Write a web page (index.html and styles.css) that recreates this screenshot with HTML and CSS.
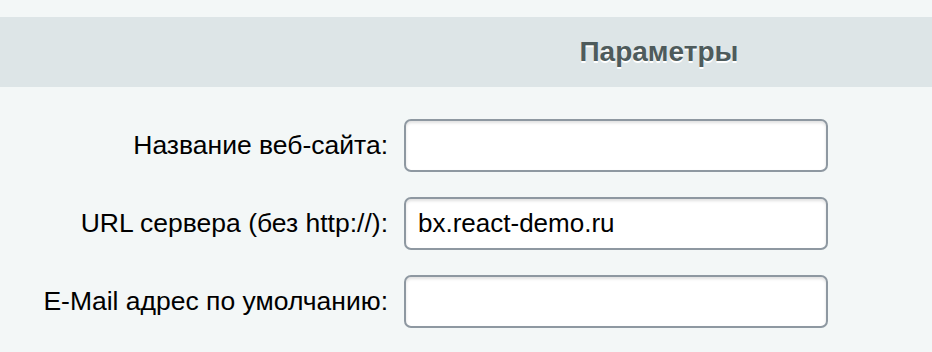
FILE: index.html
```html
<!DOCTYPE html>
<html lang="ru">
<head>
    <meta charset="UTF-8">
    <meta name="viewport" content="width=device-width, initial-scale=1.0">
    <title>Параметры</title>
    <link rel="stylesheet" href="styles.css">
</head>
<body>

<div class="section-head">
    <h2>Параметры</h2>
</div>

<div class="form">
    <label for="siteName">Название веб-сайта:</label>
    <input type="text" id="siteName">

    <label for="serverUrl">URL сервера (без http://):</label>
    <input type="text" id="serverUrl" value="bx.react-demo.ru">

    <label for="email">E-Mail адрес по умолчанию:</label>
    <input type="text" id="email">
</div>

</body>
</html>
```

FILE: styles.css
```css
body {
    margin: 0;
    padding-top: 17px;
    font-family: "Liberation Sans", Arial, sans-serif;
    background-color: #f3f7f7;
    color: #000;
}

/* Заголовок блока */
.section-head {
    display: grid;
    grid-template-columns: 388px 510px;
    column-gap: 16px;
    height: 70px;
    align-items: center;
    background-color: #dde5e7;
}

.section-head h2 {
    grid-column: 2;
    margin: 0;
    text-align: center;
    font-size: 28px;
    font-weight: bold;
    color: #4e5b5c;
    text-shadow: 0 2px 0 #ffffff;
}

/* Поля формы */
.form {
    display: grid;
    grid-template-columns: 388px 424px;
    column-gap: 16px;
    row-gap: 25px;
    align-items: center;
    padding-top: 32px;
}

.form label {
    text-align: right;
    font-size: 26.5px;
}

.form input {
    box-sizing: border-box;
    width: 424px;
    height: 53px;
    padding: 0 12px;
    font-family: inherit;
    font-size: 26px;
    color: #000;
    background-color: #ffffff;
    border: 2px solid #8e98a1;
    border-radius: 7px;
    box-shadow: inset 0 2px 3px rgba(0, 0, 0, 0.12);
    outline: none;
}
```
